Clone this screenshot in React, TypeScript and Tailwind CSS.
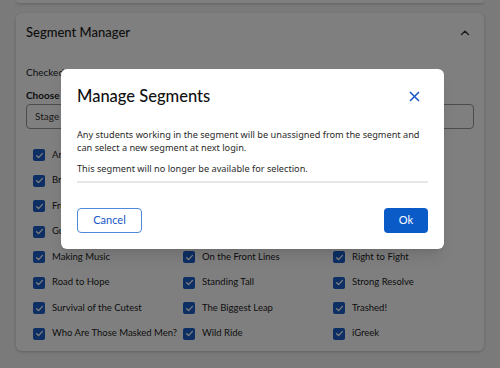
import React from "react";

const rows: string[][] = [
  ["Animal Adventures", "Into the Wild", "Lost Cities"],
  ["Brave New World", "Journey North", "Mighty Machines"],
  ["Frozen Frontier", "Legends of Old", "Mission Possible"],
  ["Guardians of Nature", "Lights, Camera!", "Mount Vesuvius"],
  ["Making Music", "On the Front Lines", "Right to Fight"],
  ["Road to Hope", "Standing Tall", "Strong Resolve"],
  ["Survival of the Cutest", "The Biggest Leap", "Trashed!"],
  ["Who Are Those Masked Men?", "Wild Ride", "iGreek"],
];

function Check() {
  return (
    <span className="flex h-[12px] w-[12px] shrink-0 items-center justify-center rounded-[2px] bg-[#1b5ec8]">
      <svg width="9" height="9" viewBox="0 0 10 10" fill="none">
        <path d="M1.8 5.2 L4 7.3 L8.3 2.6" stroke="white" strokeWidth="1.4" strokeLinecap="round" strokeLinejoin="round" />
      </svg>
    </span>
  );
}

export default function App() {
  return (
    <div className="relative min-h-[368px] w-[500px] overflow-hidden bg-[#f4f4f4]" style={{ fontFamily: "Lato, 'Noto Sans', sans-serif" }}>
      <div className="mx-[16px] h-[3px] rounded-b-md bg-white shadow-[0_1px_3px_rgba(0,0,0,0.2)]" />
      <div className="mx-[16px] mt-[10px] h-[338px] rounded-md bg-white px-[10px] shadow-[0_1px_3px_rgba(0,0,0,0.2)]">
        <div className="flex h-[38px] items-center justify-between pt-[1px]">
          <span className="text-[13px] font-medium text-[#1a1a1a]">Segment Manager</span>
          <svg width="12" height="8" viewBox="0 0 12 8" fill="none" className="mr-[3px]">
            <path d="M2.5 5.5 L6 2.2 L9.5 5.5" stroke="#333" strokeWidth="1.3" strokeLinecap="round" />
          </svg>
        </div>
        <div className="mt-[14px] text-[10px] text-[#1a1a1a]">Checked segments are available for selection.</div>
        <div className="mt-[8px] text-[10px] font-bold text-[#1a1a1a]">Choose a stage</div>
        <div className="mt-[1px] flex h-[25px] items-center rounded border border-[#999] px-[8px] text-[10px] text-[#333]">Stage 1</div>
        <div className="mt-[20px] grid grid-cols-[150px_150px_148px] gap-y-[13.5px] pl-[7px]">
          {rows.flat().map((t) => (
            <div key={t} className="flex h-[12px] items-center gap-[7px] whitespace-nowrap text-[9.5px] text-[#1a1a1a]">
              <Check />
              <span>{t}</span>
            </div>
          ))}
        </div>
      </div>

      <div className="absolute inset-0 bg-black/50" />

      <div className="absolute left-[61px] top-[69px] h-[180px] w-[383px] rounded-md bg-white px-[16px] shadow-lg">
        <div className="flex h-[50px] items-center justify-between pt-[4px]">
          <span className="text-[16.5px] font-medium text-[#111]">Manage Segments</span>
          <svg width="11" height="11" viewBox="0 0 11 11" fill="none" className="mr-[8px]">
            <path d="M1 1 L10 10 M10 1 L1 10" stroke="#1456c4" strokeWidth="1.5" />
          </svg>
        </div>
        <div className="text-[9.2px] leading-[12.5px] text-[#2a2a2a]" style={{ fontFamily: "'Noto Sans', sans-serif" }}>
          <p className="pt-[10px]">Any students working in the segment will be unassigned from the segment and can select a new segment at next login.</p>
          <p className="mt-[8.5px]">This segment will no longer be available for selection.</p>
        </div>
        <div className="mt-[6px] h-[2px] bg-[#e6e6e6]" />
        <div className="mt-[25px] flex items-center justify-between">
          <button className="h-[25px] w-[65px] rounded border border-[#4f8ad8] text-[11px] text-[#1456c4]">Cancel</button>
          <button className="h-[25px] w-[44px] rounded bg-[#0a5ac8] text-[11px] text-white">Ok</button>
        </div>
      </div>
    </div>
  );
}
